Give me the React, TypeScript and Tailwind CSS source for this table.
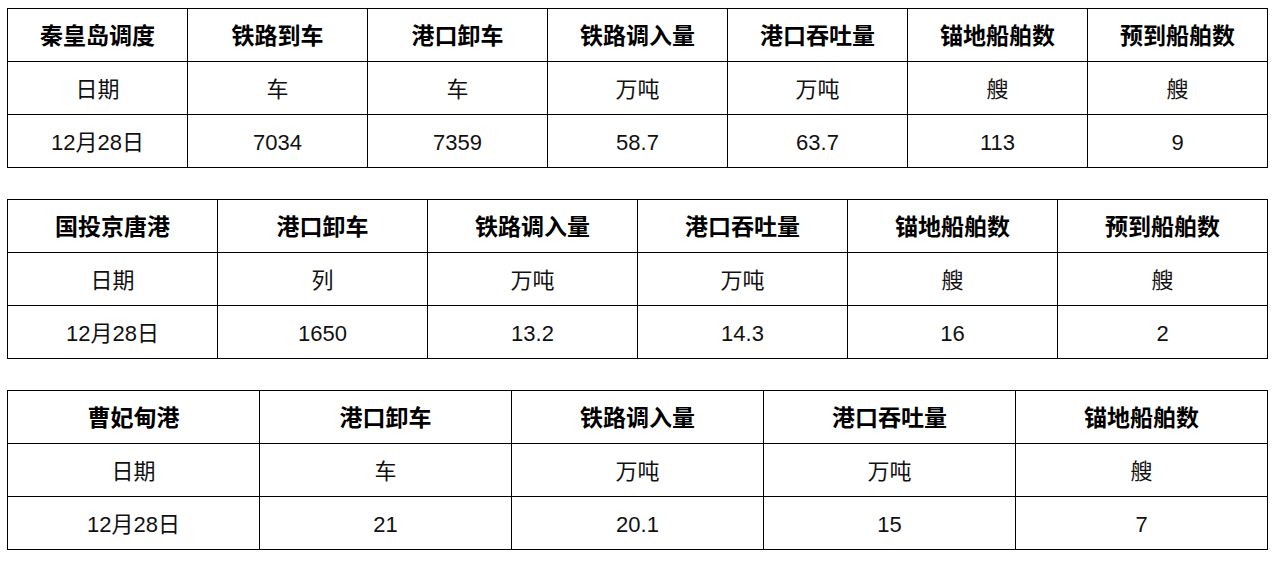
type Table = {
  cols: string[];
  units: string[];
  values: string[];
  colWidth: string;
};

const tables: Table[] = [
  {
    cols: ['秦皇岛调度', '铁路到车', '港口卸车', '铁路调入量', '港口吞吐量', '锚地船舶数', '预到船舶数'],
    units: ['日期', '车', '车', '万吨', '万吨', '艘', '艘'],
    values: ['12月28日', '7034', '7359', '58.7', '63.7', '113', '9'],
    colWidth: 'w-[180px]',
  },
  {
    cols: ['国投京唐港', '港口卸车', '铁路调入量', '港口吞吐量', '锚地船舶数', '预到船舶数'],
    units: ['日期', '列', '万吨', '万吨', '艘', '艘'],
    values: ['12月28日', '1650', '13.2', '14.3', '16', '2'],
    colWidth: 'w-[210px]',
  },
  {
    cols: ['曹妃甸港', '港口卸车', '铁路调入量', '港口吞吐量', '锚地船舶数'],
    units: ['日期', '车', '万吨', '万吨', '艘'],
    values: ['12月28日', '21', '20.1', '15', '7'],
    colWidth: 'w-[252px]',
  },
];

function DispatchTable({ table }: { table: Table }) {
  return (
    <table className="border-collapse table-fixed w-[1261px]">
      <tbody>
        <tr>
          {table.cols.map((c, i) => (
            <td key={i} className={`${table.colWidth} h-[53px] pt-[2px] border border-black text-center font-bold text-[23px]`}>
              {c}
            </td>
          ))}
        </tr>
        <tr>
          {table.units.map((c, i) => (
            <td key={i} className="h-[53px] pt-[2px] border border-black text-center text-[22px] text-[#111]">
              {c}
            </td>
          ))}
        </tr>
        <tr>
          {table.values.map((c, i) => (
            <td key={i} className="h-[53px] pt-[2px] border border-black text-center text-[22px] text-[#111]">
              {c}
            </td>
          ))}
        </tr>
      </tbody>
    </table>
  );
}

export default function App() {
  return (
    <div
      className="w-[1276px] h-[561px] bg-white text-black pl-[7px] pt-[8px] flex flex-col gap-[31px]"
      style={{ fontFamily: '"Liberation Sans", "Noto Sans CJK SC", sans-serif' }}
    >
      {tables.map((t, i) => (
        <DispatchTable key={i} table={t} />
      ))}
    </div>
  );
}
